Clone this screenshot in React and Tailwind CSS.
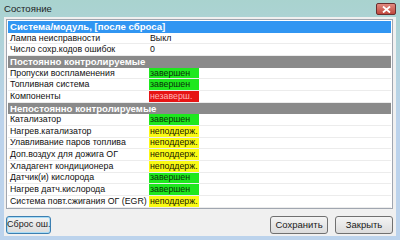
import React from 'react';

const rows = [
  { type: 'head', color: 'blue', label: 'Система/модуль, [после сброса]' },
  { label: 'Лампа неисправности', value: 'Выкл' },
  { label: 'Число сохр.кодов ошибок', value: '0' },
  { type: 'head', color: 'gray', label: 'Постоянно контролируемые' },
  { label: 'Пропуски воспламенения', value: 'завершен', state: 'ok' },
  { label: 'Топливная система', value: 'завершен', state: 'ok' },
  { label: 'Компоненты', value: 'незаверш.', state: 'bad' },
  { type: 'head', color: 'gray', label: 'Непостоянно контролируемые' },
  { label: 'Катализатор', value: 'завершен', state: 'ok' },
  { label: 'Нагрев.катализатор', value: 'неподдерж.', state: 'na' },
  { label: 'Улавливание паров топлива', value: 'неподдерж.', state: 'na' },
  { label: 'Доп.воздух для дожига ОГ', value: 'неподдерж.', state: 'na' },
  { label: 'Хладагент кондиционера', value: 'неподдерж.', state: 'na' },
  { label: 'Датчик(и) кислорода', value: 'завершен', state: 'ok' },
  { label: 'Нагрев датч.кислорода', value: 'завершен', state: 'ok' },
  { label: 'Система повт.сжигания ОГ (EGR)', value: 'неподдерж.', state: 'na' },
];

const stateCls = {
  ok: 'bg-[#1ee81e] text-[#0a300a]',
  bad: 'bg-[#e61414] text-[#ffb4b4]',
  na: 'bg-[#fafa14] text-[#202000]',
};

function Row({ row }) {
  if (row.type === 'head') {
    return (
      <div
        className={`h-[11.67px] flex items-center pl-[2px] font-bold text-[9.6px] text-white leading-none whitespace-nowrap ${
          row.color === 'blue' ? 'bg-[#3196f2]' : 'bg-[#8a8a8a]'
        }`}
      >
        {row.label}
      </div>
    );
  }
  return (
    <div className="h-[11.67px] flex border-b border-[#ececec] leading-none">
      <div className="w-[141px] pl-[2px] flex items-center text-[#101010] whitespace-nowrap overflow-hidden">{row.label}</div>
      <div className={`w-[50px] pl-[1px] flex items-center whitespace-nowrap overflow-hidden ${row.state ? stateCls[row.state] : 'text-[#101010]'}`}>
        {row.value}
      </div>
    </div>
  );
}

function Btn({ children, focused }) {
  return (
    <button
      className={`h-[18px] rounded-[3px] border whitespace-nowrap text-[#1a1a1a] bg-gradient-to-b from-[#f4f4f4] to-[#dcdcdc] ${
        focused ? 'w-[45px] text-[9px] border-[#3c7fb1] shadow-[inset_0_0_0_1px_#a8dcf6]' : 'w-[58px] text-[9.5px] border-[#707070]'
      }`}
    >
      {children}
    </button>
  );
}

export default function App() {
  return (
    <div className="w-[400px] h-[240px] flex flex-col bg-gradient-to-b from-[#a9d3cf] via-[#bcd3ec] to-[#bcd3ec] text-[8.8px]" style={{ fontFamily: '"Liberation Sans", Arial, sans-serif' }}>
      {/* title bar */}
      <div className="h-[17px] flex items-center justify-between pl-[4px] pr-[4px]">
        <span className="text-[9.6px] text-[#1e1e1e] pt-[1px]">Состояние</span>
        <div className="w-[20px] h-[12px] mt-[1px] rounded-[2px] border border-[#6a2e2e] bg-gradient-to-b from-[#e08a80] to-[#c0463c] flex items-center justify-center">
          <svg width="9" height="7" viewBox="0 0 9 7">
            <path d="M1 0.5 L8 6.5 M8 0.5 L1 6.5" stroke="white" strokeWidth="1.8" />
          </svg>
        </div>
      </div>

      {/* client area */}
      <div className="flex-1 mx-[4px] mb-[4px] bg-[#f0f0f0] flex flex-col pt-[2px] pl-[2px] pr-[3px]">
        <div className="h-[190px] bg-white border border-[#a0a6b0] p-[1px]">
          {rows.map((r, i) => (
            <Row key={i} row={r} />
          ))}
        </div>
        <div className="flex items-center mt-[7px]">
          <Btn focused>Сброс ош.</Btn>
          <div className="flex-1" />
          <div className="flex gap-[7px]">
            <Btn>Сохранить</Btn>
            <Btn>Закрыть</Btn>
          </div>
        </div>
      </div>
    </div>
  );
}
